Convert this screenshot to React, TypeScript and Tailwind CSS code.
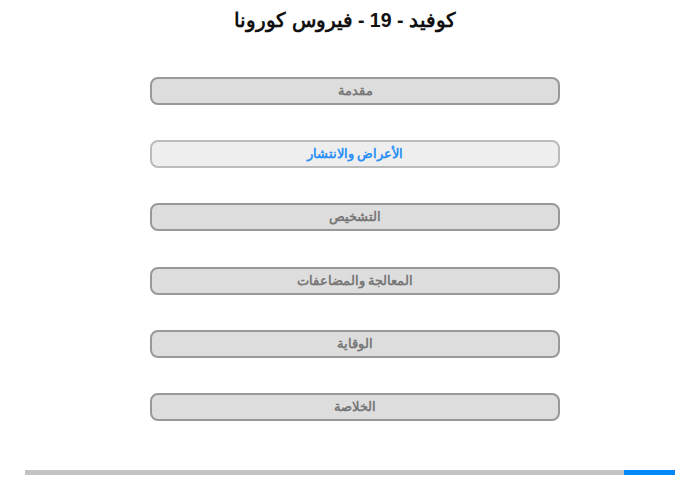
const items = [
  { label: "مقدمة", active: false },
  { label: "الأعراض والانتشار", active: true },
  { label: "التشخيص", active: false },
  { label: "المعالجة والمضاعفات", active: false },
  { label: "الوقاية", active: false },
  { label: "الخلاصة", active: false },
]

export default function App() {
  return (
    <div className="w-[700px] h-[480px] bg-white flex flex-col" style={{ fontFamily: '"Liberation Sans", Arial, sans-serif' }}>
      {/* Title */}
      <div dir="rtl" className="h-[40px] pt-[8px] text-center text-[19.5px] leading-[24px] font-bold text-[#111] pr-[10px]">
        كوفيد - 19 - فيروس كورونا
      </div>

      {/* Menu */}
      <div className="mt-[37px] flex flex-col gap-[35px] pl-[150px]">
        {items.map((it, i) => (
          <div
            key={it.label}
            dir="rtl"
            className={
              (i === 3 ? "mt-[1px] " : "") +
              (it.active
                ? "w-[410px] h-[28px] rounded-[8px] border-2 border-[#bbbbbb] bg-[#eeeeee] text-[#2b90f5] flex items-center justify-center text-[13px] font-bold"
                : "w-[410px] h-[28px] rounded-[8px] border-2 border-[#999999] bg-[#dddddd] text-[#777777] flex items-center justify-center text-[13px] font-bold")
            }
          >
            {it.label}
          </div>
        ))}
      </div>

      {/* Progress */}
      <div className="mt-auto mb-[5px] ml-[25px] w-[650px] h-[5px] bg-[#c4c4c4] flex justify-end">
        <div className="w-[51px] h-full bg-[#0088ff]" />
      </div>
    </div>
  )
}
